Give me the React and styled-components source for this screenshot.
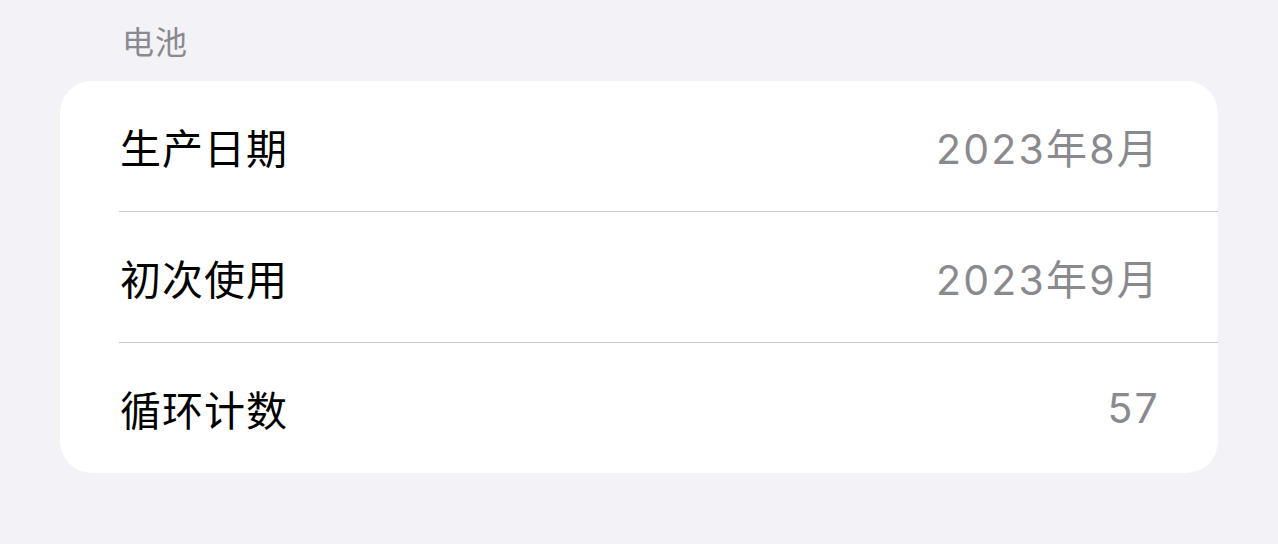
import React from 'react'
import styled, { createGlobalStyle } from 'styled-components';

const GlobalStyle = createGlobalStyle`
    html, body {
        margin: 0;
        padding: 0;
        background: #f2f2f7;
    }
    body {
        font-family: "Inter", "Noto Sans CJK SC", sans-serif;
        -webkit-font-smoothing: antialiased;
    }
`;

const Page = styled.div`
    width: 1278px;
    height: 544px;
    box-sizing: border-box;
    padding: 0 60px;
    background: #f2f2f7;
`;

// 섹션 제목 (회색 작은 글씨)
const SectionHeader = styled.div`
    padding: 23px 0 0 62px;
    height: 81px;
    box-sizing: border-box;
    font-size: 32px;
    line-height: 40px;
    color: #8a8a8e;
    letter-spacing: 1px;
`;

const Card = styled.div`
    background: #ffffff;
    border-radius: 32px;
    overflow: hidden;
`;

const Row = styled.div`
    display: flex;
    align-items: center;
    justify-content: space-between;
    height: ${(p) => (p.last ? '130px' : '131px')};
    margin-left: 59px;
    padding-right: 61px;
    box-sizing: border-box;
    border-bottom: ${(p) => (p.last ? 'none' : '1px solid #c8c8cb')};
`;

const Label = styled.span`
    font-size: 41px;
    letter-spacing: 1px;
    color: #000000;
    padding-left: 1px;
`;

const Value = styled.span`
    font-size: 41px;
    letter-spacing: 2.2px;
    color: #8a8a8e;
    margin-right: -3px;
`;

const rows = [
    { label: '生产日期', value: '2023年8月' },
    { label: '初次使用', value: '2023年9月' },
    { label: '循环计数', value: '57' },
];

export default function App() {
    return (
        <>
            <GlobalStyle />
            <Page>
                <SectionHeader>电池</SectionHeader>
                <Card>
                    {rows.map((r, i) => (
                        <Row key={r.label} last={i === rows.length - 1}>
                            <Label>{r.label}</Label>
                            <Value>{r.value}</Value>
                        </Row>
                    ))}
                </Card>
            </Page>
        </>
    );
}
